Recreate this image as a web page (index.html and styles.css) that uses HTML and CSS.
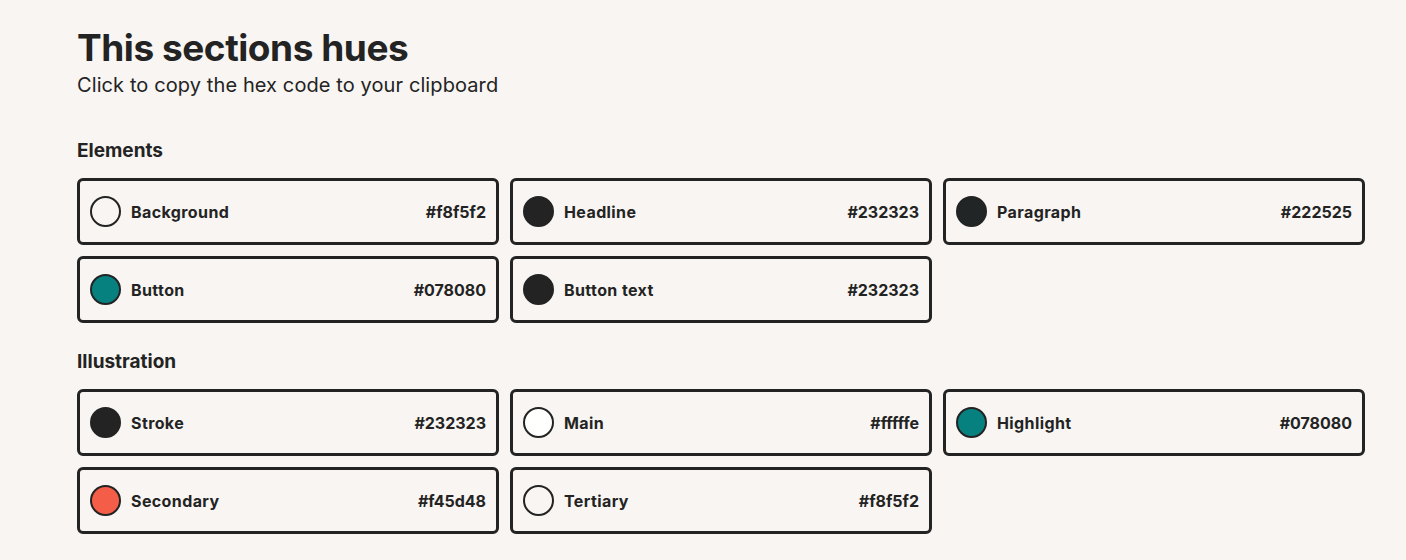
FILE: index.html
```html
<!DOCTYPE html>
<html>
<head>
<meta charset="utf-8">
<link rel="stylesheet" href="styles.css">
</head>
<body>
<main class="page">
  <h1 class="title">This sections hues</h1>
  <p class="subtitle">Click to copy the hex code to your clipboard</p>

  <h2 class="group-title">Elements</h2>
  <div class="grid">
    <div class="swatch"><span class="dot" style="background:#f8f5f2"></span><span class="name">Background</span><span class="hex">#f8f5f2</span></div>
    <div class="swatch"><span class="dot" style="background:#232323"></span><span class="name">Headline</span><span class="hex">#232323</span></div>
    <div class="swatch"><span class="dot" style="background:#222525"></span><span class="name">Paragraph</span><span class="hex">#222525</span></div>
    <div class="swatch"><span class="dot" style="background:#078080"></span><span class="name">Button</span><span class="hex">#078080</span></div>
    <div class="swatch"><span class="dot" style="background:#232323"></span><span class="name">Button text</span><span class="hex">#232323</span></div>
  </div>

  <h2 class="group-title">Illustration</h2>
  <div class="grid">
    <div class="swatch"><span class="dot" style="background:#232323"></span><span class="name">Stroke</span><span class="hex">#232323</span></div>
    <div class="swatch"><span class="dot" style="background:#fffffe"></span><span class="name">Main</span><span class="hex">#fffffe</span></div>
    <div class="swatch"><span class="dot" style="background:#078080"></span><span class="name">Highlight</span><span class="hex">#078080</span></div>
    <div class="swatch"><span class="dot" style="background:#f45d48"></span><span class="name">Secondary</span><span class="hex">#f45d48</span></div>
    <div class="swatch"><span class="dot" style="background:#f8f5f2"></span><span class="name">Tertiary</span><span class="hex">#f8f5f2</span></div>
  </div>
</main>
</body>
</html>
```
FILE: styles.css
```css
html, body {
  margin: 0;
  padding: 0;
  background: #f8f5f2;
  color: #232323;
  font-family: Inter, "Liberation Sans", sans-serif;
}

.page {
  width: 1288px;
  margin-left: 77px;
  padding-top: 25px;
}

.title {
  margin: 0;
  font-size: 37px;
  font-weight: 700;
  line-height: 46px;
  letter-spacing: -0.45px;
}

.subtitle {
  margin: 0;
  font-size: 20px;
  line-height: 28px;
  font-weight: 400;
  letter-spacing: 0.1px;
}

.group-title {
  margin: 39px 0 14px;
  font-size: 19px;
  line-height: 26px;
  font-weight: 700;
}

.grid + .group-title {
  margin-top: 26px;
}

.grid {
  display: grid;
  grid-template-columns: repeat(3, 1fr);
  gap: 11px;
}

.swatch {
  box-sizing: border-box;
  height: 67px;
  display: flex;
  align-items: center;
  padding: 0 10px;
  border: 3px solid #232323;
  border-radius: 6px;
}

.dot {
  box-sizing: border-box;
  width: 31px;
  height: 31px;
  border: 2.5px solid #232323;
  border-radius: 50%;
  flex: none;
}

.name {
  margin-left: 10px;
  flex: 1;
  font-size: 16px;
  font-weight: 700;
  letter-spacing: 0.4px;
}

.hex {
  font-size: 16px;
  font-weight: 700;
}
```
